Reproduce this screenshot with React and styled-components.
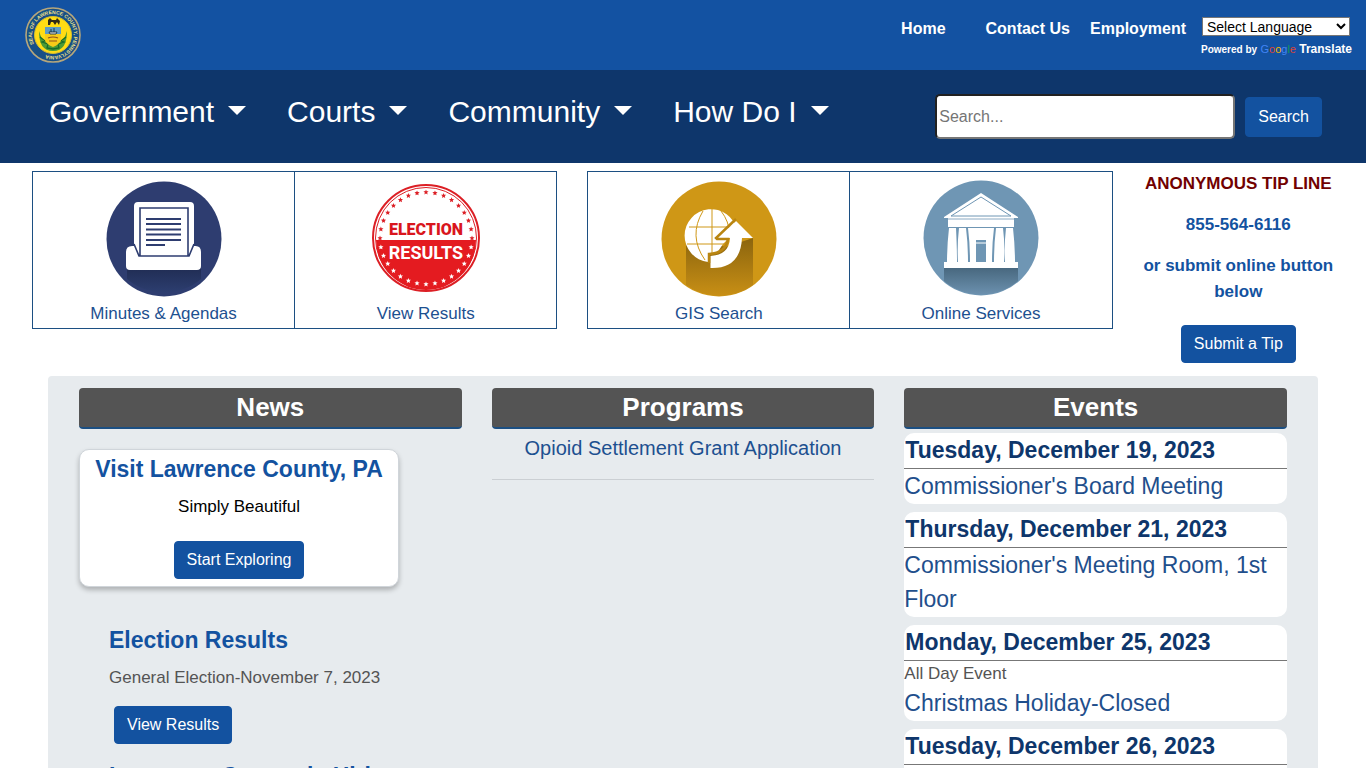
import React from "react";
import styled, { createGlobalStyle } from "styled-components";

const Global = createGlobalStyle`
  *, *::before, *::after { box-sizing: border-box; }
  body {
    margin: 0;
    background: #fff;
    color: #545454;
    font: 17px/26px "Liberation Sans", Arial, sans-serif;
    overflow-x: hidden;
  }
  h1, h2, h3, h4, p { margin: 0; }
  a { color: #1352a0; text-decoration: none; }
  html { scrollbar-width: none; }
`;

const TopBar = styled.header`
  display: flex;
  justify-content: space-between;
  height: 70px;
  padding: 7px 14px 0 25px;
  background: #1352a2;
`;

const TopLinks = styled.nav`
  display: flex;
  gap: 20px;
  padding-top: 9px;
  font-size: 16px;
`;

const TopLink = styled.a`
  color: #fff;
  font-weight: bold;
  &:first-child { margin-right: 20px; }
`;

const TopRight = styled.div`
  display: flex;
  gap: 15px;
`;

const Translate = styled.div`
  width: 151px;
  padding-top: 10px;
  color: #fff;
  line-height: 16px;
  font-weight: bold;
  white-space: nowrap;
`;

const LanguageSelect = styled.select`
  display: block;
  width: 148px;
  height: 19px;
  margin: 0 0 4px 1px;
  padding: 0;
  border: 1px solid #767676;
  background: #fff;
  color: #000;
  font: 14px "Liberation Sans", Arial, sans-serif;
`;

const Powered = styled.div`
  display: flex;
  align-items: baseline;
  justify-content: space-between;
  font-size: 10px;
  line-height: 18px;
  a { color: #fff; font-size: 12px; }
`;

const GoogleWord = styled.span`
  font-size: 11px;
  font-weight: normal;
  color: ${(p) => p.$color};
`;

const NavBar = styled.div`
  display: flex;
  justify-content: space-between;
  align-items: flex-start;
  height: 93px;
  padding: 24px 44px 0 49px;
  background: #0e366b;
`;

const Menu = styled.nav`
  display: flex;
  gap: 41px;
`;

const MenuButton = styled.button`
  display: flex;
  align-items: center;
  gap: 14px;
  padding: 0;
  border: 0;
  background: none;
  color: #fff;
  font: 30px/35px "Liberation Sans", Arial, sans-serif;
  &::after {
    content: "";
    margin-bottom: 2px;
    border: 9px solid transparent;
    border-top-color: #fff;
    border-bottom: 0;
  }
`;

const SearchForm = styled.form`
  display: flex;
  align-items: center;
  gap: 10px;
`;

const SearchInput = styled.input`
  width: 300px;
  height: 45px;
  padding: 1px 2px;
  border: 2px inset #767676;
  border-radius: 5px;
  background: #fff;
  color: #000;
  font: 16px "Liberation Sans", Arial, sans-serif;
  &::placeholder { color: #757575; }
`;

const Button = styled.button`
  height: ${(p) => (p.$tall ? 40 : 38)}px;
  padding: 0 12px;
  border: 1px solid #1352a0;
  border-radius: 4px;
  background: #1352a0;
  color: #fff;
  font: 16px/24px "Liberation Sans", Arial, sans-serif;
`;

const QuickRow = styled.section`
  display: flex;
  align-items: flex-start;
  gap: 30px;
  padding: 8px 32px 0;
`;

const QuickGroup = styled.div`
  display: flex;
  flex: 525 1 0;
  border: 1px solid #1c4f82;
`;

const QuickLink = styled.a`
  flex: 1;
  display: flex;
  flex-direction: column;
  align-items: center;
  padding: 8px 0 1px;
  color: #1d5090;
  line-height: 26px;
  & + & { border-left: 1px solid #1c4f82; }
  svg { display: block; width: 116px; height: 121px; }
`;

const TipLine = styled.aside`
  flex: 192 1 0;
  display: flex;
  flex-direction: column;
  align-items: center;
  gap: 15px;
  text-align: center;
  font-weight: bold;
  color: #1352a0;
  h2 { font-size: 17px; line-height: 26px; color: #710000; white-space: nowrap; }
  ${Button} { margin-top: 5px; }
`;

const Board = styled.main`
  display: grid;
  grid-template-columns: repeat(3, 1fr);
  gap: 30px;
  margin: 13px 48px 0;
  padding: 12px 31px 30px;
  border-radius: 4px;
  background: #e7ebee;
`;

const ColumnTitle = styled.h2`
  height: 41px;
  border-bottom: 2px solid #1c4f82;
  border-radius: 4px;
  background: #545454;
  color: #fff;
  font-size: 26px;
  line-height: 38px;
  text-align: center;
`;

const VisitCard = styled.article`
  display: flex;
  flex-direction: column;
  align-items: center;
  width: 320px;
  max-width: 100%;
  margin-top: 20px;
  padding: 4px 0 7px;
  border: 1px solid #d0d5da;
  border-radius: 10px;
  background: #fff;
  box-shadow: 0 3px 5px rgba(0, 0, 0, 0.25);
  color: #000;
  p { margin: 10px 0 21px; }
`;

const NewsTitle = styled.h3`
  color: #1352a0;
  font-size: 23px;
  line-height: 30px;
`;

const NewsItem = styled.article`
  padding: 38px 30px 0;
  & + & { padding-top: 17px; }
  p { margin: 10px 0 15px; }
  ${Button} { margin-left: 5px; }
`;

const ProgramLink = styled.a`
  display: block;
  padding: 3px 0 14px;
  border-bottom: 1px solid #cbcfd3;
  color: #1d5090;
  font-size: 20px;
  line-height: 33px;
  text-align: center;
`;

const EventCard = styled.article`
  margin-top: 8px;
  padding-bottom: 1px;
  border-radius: 10px;
  background: #fff;
  ${ColumnTitle} + & { margin-top: 4px; }
  p { line-height: 25px; }
`;

const EventDate = styled.h3`
  height: 36px;
  padding-left: 1px;
  border-bottom: 1px solid #777;
  color: #0e366b;
  font-size: 23px;
  line-height: 34px;
`;

const EventLink = styled.a`
  display: block;
  color: #1f4f8c;
  font-size: 23px;
  line-height: 34px;
`;

function Seal() {
  return (
    <svg width="56" height="56" viewBox="0 0 56 56" role="img" aria-label="Seal of Lawrence County, Pennsylvania">
      <defs>
        <path id="sealRing" d="M9 37A21 21 0 0 1 47 19A21 21 0 0 1 9 37" />
      </defs>
      <circle cx="28" cy="28" r="27" fill="#174f86" stroke="#b5a67c" strokeWidth="1.6" />
      <circle cx="28" cy="28" r="18.5" fill="#ffdc14" stroke="#d5bd30" />
      <text fill="#efe08a" fontFamily="Liberation Sans, sans-serif" fontWeight="bold" fontSize="5">
        <textPath href="#sealRing">SEAL OF LAWRENCE COUNTY, PENNSYLVANIA</textPath>
      </text>
      <path d="M14 24c0 13 4 20 14 20s14-7 14-20c-2 6-3 9-6 11l-8 3-8-3c-3-2-4-5-6-11z" fill="#4c9a35" />
      <path d="M15 30l5 4-3 1 6 2-1 4 6 1 6-1-1-4 6-2-3-1 5-4" fill="none" stroke="#176b2b" strokeWidth="1.3" />
      <path d="M20 20h16v13q-2 5-8 7-6-2-8-7z" fill="#f7cb18" />
      <path d="M20 20h16v7H20z" fill="#5d9bc4" />
      <path d="M24 25h8l-1 2h-6zM26 22v3m3-4v4" fill="#eee" stroke="#172f3c" strokeWidth=".9" />
      <path d="M23 31q5-2 10 0M24 34h8" fill="none" stroke="#8d521c" strokeWidth="1.2" />
      <path d="M23 18v-5l2-2 2 2h4l1-2 3 3-1 4-2-3-2 3-2-3h-2l-1 3z" fill="#2f2a17" />
    </svg>
  );
}

function MinutesIcon() {
  return (
    <svg viewBox="0 0 116 121" aria-hidden="true">
      <defs><linearGradient id="trayShade" x2="0" y2="1"><stop stopColor="#202d54" /><stop offset="1" stopColor="#2d3e70" /></linearGradient></defs>
      <circle cx="58" cy="59" r="57.5" fill="#2e3d70" />
      <path d="M21 88h74v11A57 57 0 0 1 21 99z" fill="url(#trayShade)" />
      <path d="M28 66V26q0-4 4-4h52q4 0 4 4v40q7-1 7 6v14q0 4-4 4H24q-4 0-4-4V72q0-7 8-6z" fill="#fff" />
      <path d="M28 64l5 12h50l5-12M34 76V28h48v48" fill="none" stroke="#2e3d70" strokeWidth="1.6" />
      <path d="M40 39h35M40 44h35M40 49.500h35M40 54.500h35M40 60h35M40 65h19" stroke="#2e3d70" strokeWidth="1.9" />
    </svg>
  );
}

const stars = Array.from({ length: 32 }, (_, i) => (i * Math.PI) / 16);

function ElectionIcon() {
  return (
    <svg viewBox="0 0 116 121" role="img" aria-label="Election Results">
      <circle cx="58" cy="58" r="53" fill="#fff" stroke="#dc1f25" strokeWidth="2" />
      <circle cx="58" cy="58" r="50.500" fill="none" stroke="#dc1f25" strokeWidth="1" />
      <path d="M8 60h100a50 50 0 0 1-100 0z" fill="#e41b20" />
      {stars.map((a) => {
        const x = 58 + 46 * Math.sin(a);
        const y = 58 - 46 * Math.cos(a);
        return (
          <path
            key={a}
            transform={`translate(${x} ${y})`}
            d="M0-2.500l.7 1.700 1.900.1-1.400 1.200.4 1.900L0 1.500l-1.600.9.400-1.900-1.400-1.200 1.900-.1z"
            fill={y < 60 ? "#dc1f25" : "#fff"}
          />
        );
      })}
      <g textAnchor="middle" fontFamily="Roboto, sans-serif" fontSize="16">
        <text x="58" y="55" fill="#d9161d" fontWeight="900">ELECTION</text>
        <text x="58" y="79" fill="#fff" fontSize="18" fontWeight="700">RESULTS</text>
      </g>
    </svg>
  );
}

function GisIcon() {
  return (
    <svg viewBox="0 0 116 121" aria-hidden="true">
      <defs><linearGradient id="globeShade" x2="0" y2="1"><stop stopColor="#8a640e" /><stop offset="1" stopColor="#c88f15" /></linearGradient></defs>
      <circle cx="58" cy="59" r="57.500" fill="#cf9716" />
      <path d="M25 57l40 10 27-9v47A57 57 0 0 1 25 105z" fill="url(#globeShade)" />
      <path d="M47 82A26.500 26.500 0 1 1 76 50L62 64 56 73H47z" fill="#fff" />
      <path d="M51 29v46M28 47h45M26 64h42M42 31q-15 25 2 49M60 31q8 10 9 24" fill="none" stroke="#cf9716" strokeWidth="1" />
      <path d="M75 41L57 58h12q-1 17-19.500 18v12q30 1 31.500-30h11z" fill="#fff" />
      <path d="M75 39L55 58l1 1h11q-2 14-19 15v9" fill="none" stroke="#b98511" strokeWidth="2.500" />
    </svg>
  );
}

function ServicesIcon() {
  return (
    <svg viewBox="0 0 116 121" aria-hidden="true">
      <defs><linearGradient id="templeShade" x2="0" y2="1"><stop stopColor="#48687f" /><stop offset="1" stopColor="#6c91af" /></linearGradient></defs>
      <circle cx="58" cy="58" r="57.500" fill="#6f96b4" />
      <path d="M21 88h74v13A57 57 0 0 1 21 101z" fill="url(#templeShade)" />
      <path d="M58 13l37 24v1h-4v9H25v-9h-4v-1z" fill="#fff" />
      <path d="M28 36l30-19 30 19z" fill="none" stroke="#6f96b4" strokeWidth="1" />
      <path d="M25 39h66" stroke="#6f96b4" strokeWidth=".8" />
      <path d="M26 48h7q1 20 1 34H24q0-16 2-34zM36 48h7q2 16 2 34H35q-1-16 1-34zM73 48h7q2 16 1 34H71q0-18 2-34zM83 48h7q2 18 2 34H82q-1-16 1-34zM45 48h26q-2 16-2 34H47q0-18-2-34zM21 82h74v6H21z" fill="#fff" />
      <path d="M53 60h10v22H53z" fill="#6f96b4" />
      <path d="M53 63h10" stroke="#fff" />
    </svg>
  );
}

const google = [["G", "#4285f4"], ["o", "#db4437"], ["o", "#f4b400"], ["g", "#4285f4"], ["l", "#0f9d58"], ["e", "#db4437"]];

const quickGroups = [
  [["Minutes & Agendas", MinutesIcon], ["View Results", ElectionIcon]],
  [["GIS Search", GisIcon], ["Online Services", ServicesIcon]],
];

const events = [
  { date: "Tuesday, December 19, 2023", title: "Commissioner's Board Meeting" },
  { date: "Thursday, December 21, 2023", title: "Commissioner's Meeting Room, 1st Floor" },
  { date: "Monday, December 25, 2023", note: "All Day Event", title: "Christmas Holiday-Closed" },
  { date: "Tuesday, December 26, 2023", note: "All Day Event", title: "Christmas Holiday-Closed" },
];

export default function App() {
  return (
    <>
      <Global />
      <TopBar>
        <a href="#home"><Seal /></a>
        <TopRight>
          <TopLinks>
            <TopLink href="#home">Home</TopLink>
            <TopLink href="#contact">Contact Us</TopLink>
            <TopLink href="#employment">Employment</TopLink>
          </TopLinks>
          <Translate>
            <LanguageSelect aria-label="Select Language">
              <option>Select Language</option>
            </LanguageSelect>
            <Powered>
              <span>Powered by</span>
              <span>{google.map(([c, color], i) => <GoogleWord key={i} $color={color}>{c}</GoogleWord>)}</span>
              <a href="#translate">Translate</a>
            </Powered>
          </Translate>
        </TopRight>
      </TopBar>
      <NavBar>
        <Menu>
          {["Government", "Courts", "Community", "How Do I"].map((m) => (
            <MenuButton key={m} type="button">{m}</MenuButton>
          ))}
        </Menu>
        <SearchForm onSubmit={(e) => e.preventDefault()}>
          <SearchInput type="text" aria-label="Search" placeholder="Search..." />
          <Button $tall type="submit">Search</Button>
        </SearchForm>
      </NavBar>
      <QuickRow>
        {quickGroups.map((group, i) => (
          <QuickGroup key={i}>
            {group.map(([label, Icon]) => (
              <QuickLink key={label} href="#quick"><Icon />{label}</QuickLink>
            ))}
          </QuickGroup>
        ))}
        <TipLine>
          <h2>ANONYMOUS TIP LINE</h2>
          <p>855-564-6116</p>
          <p>or submit online button below</p>
          <Button type="button">Submit a Tip</Button>
        </TipLine>
      </QuickRow>
      <Board>
        <section>
          <ColumnTitle>News</ColumnTitle>
          <VisitCard>
            <NewsTitle>Visit Lawrence County, PA</NewsTitle>
            <p>Simply Beautiful</p>
            <Button type="button">Start Exploring</Button>
          </VisitCard>
          <NewsItem>
            <NewsTitle>Election Results</NewsTitle>
            <p>General Election-November 7, 2023</p>
            <Button type="button">View Results</Button>
          </NewsItem>
          <NewsItem>
            <NewsTitle>Lawrence County is Hiring</NewsTitle>
          </NewsItem>
        </section>
        <section>
          <ColumnTitle>Programs</ColumnTitle>
          <ProgramLink href="#program">Opioid Settlement Grant Application</ProgramLink>
        </section>
        <section>
          <ColumnTitle>Events</ColumnTitle>
          {events.map((e) => (
            <EventCard key={e.date}>
              <EventDate>{e.date}</EventDate>
              {e.note && <p>{e.note}</p>}
              <EventLink href="#event">{e.title}</EventLink>
            </EventCard>
          ))}
        </section>
      </Board>
    </>
  );
}
